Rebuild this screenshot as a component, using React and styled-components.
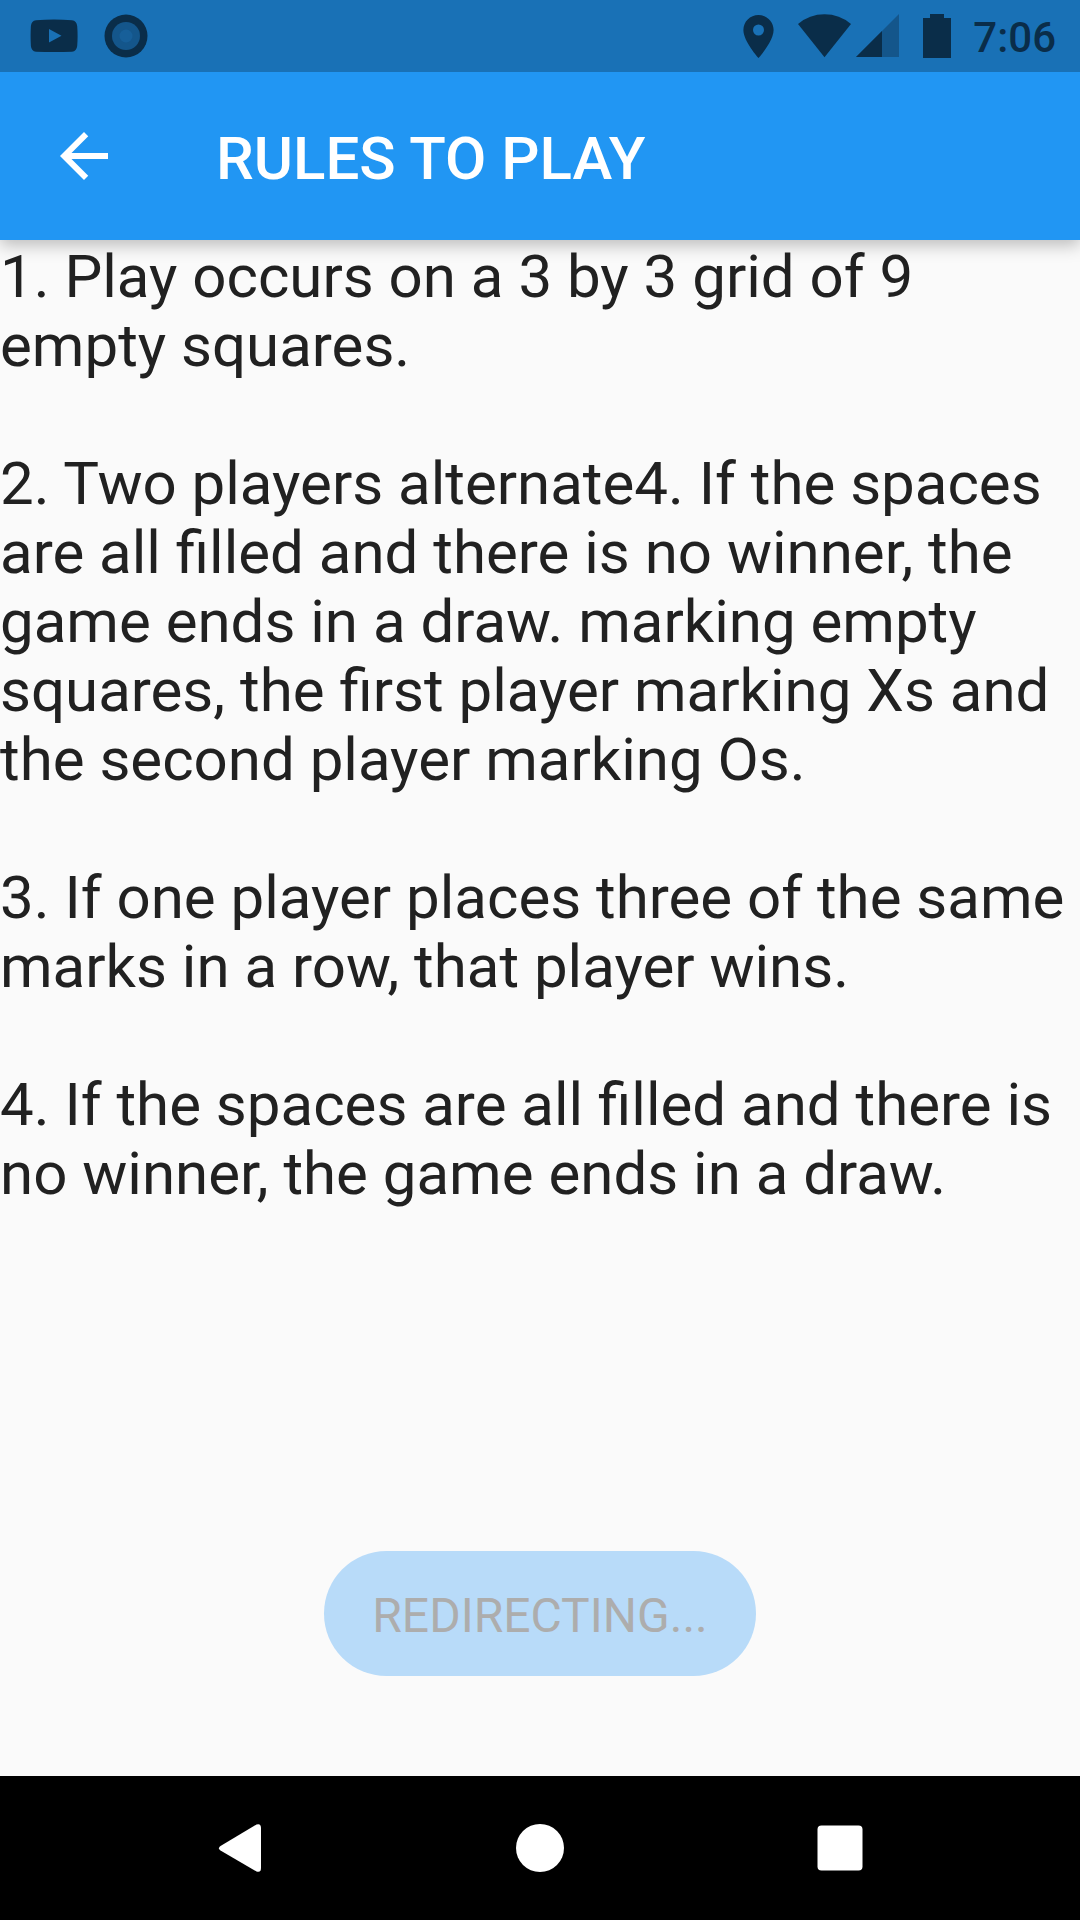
import React from "react";
import styled, { createGlobalStyle } from "styled-components";

const GlobalStyle = createGlobalStyle`
  *, *::before, *::after { box-sizing: border-box; }
  body {
    margin: 0;
    background: #fafafa;
    font-family: Roboto, "Noto Sans", sans-serif;
  }
`;

const Screen = styled.div`
  display: flex;
  flex-direction: column;
  min-height: 100vh;
`;

const StatusBar = styled.div`
  position: relative;
  z-index: 1;
  display: flex;
  align-items: center;
  justify-content: space-between;
  height: 72px;
  padding: 0 24px 0 30px;
  background: #1971b6;
  color: #0a2d49;
`;

const StatusGroup = styled.div`
  display: flex;
  align-items: center;
  gap: ${({ $gap }) => $gap}px;
`;

const Glyph = styled.svg`
  display: block;
  flex: none;
  fill: currentColor;
`;

const Clock = styled.time`
  padding-top: 4px;
  font-size: 42px;
  font-weight: 500;
  line-height: 50px;
`;

const AppBar = styled.header`
  position: relative;
  display: flex;
  align-items: center;
  gap: 72px;
  height: 168px;
  padding: 0 24px;
  background: #2196f3;
  color: #fff;
  box-shadow: 0 5px 16px rgba(0, 0, 0, 0.26);
`;

const IconButton = styled.button`
  display: grid;
  place-items: center;
  width: 120px;
  height: 120px;
  padding: 0;
  border: 0;
  background: none;
  color: inherit;
`;

const Title = styled.h1`
  margin: 0;
  padding-top: 6px;
  font-size: 60px;
  font-weight: 500;
  line-height: 70px;
`;

const Content = styled.main`
  display: flex;
  flex: 1;
  flex-direction: column;
  align-items: center;
  justify-content: space-between;
  gap: 69px;
  padding: 2px 0 100px;
`;

const Rules = styled.div`
  display: flex;
  flex-direction: column;
  gap: 69px;
  width: 100%;
`;

const Rule = styled.p`
  margin: 0;
  color: #212121;
  font-size: 60px;
  line-height: 69px;
`;

const PillButton = styled.button`
  height: 125px;
  padding: 4px 48px 0;
  border: 0;
  border-radius: 63px;
  background: #b8dbf9;
  color: #adadad;
  font-family: inherit;
  font-size: 48px;
  line-height: 56px;
`;

const NavBar = styled.nav`
  display: grid;
  grid-template-columns: repeat(3, 1fr);
  justify-items: center;
  align-items: center;
  height: 144px;
  padding: 0 90px;
  background: #000;
  color: #fff;
`;

const rules = [
  "1. Play occurs on a 3 by 3 grid of 9 empty squares.",
  "2. Two players alternate4. If the spaces are all filled and there is no winner, the game ends in a draw. marking empty squares, the first player marking Xs and the second player marking Os.",
  "3. If one player places three of the same marks in a row, that player wins.",
  "4. If the spaces are all filled and there is no winner, the game ends in a draw.",
];

export default function App() {
  return (
    <>
      <GlobalStyle />
      <Screen>
        <StatusBar>
          <StatusGroup $gap={26}>
            <Glyph width="48" height="34" viewBox="0 0 48 34" aria-hidden="true">
              <path
                fillRule="evenodd"
                d="M6 1.3Q24-.3 42 1.3Q46.6 2 47.2 7Q48 17 47.2 27Q46.6 32.2 42 32.7Q24 33.5 6 32.7Q1.4 32.2.9 27Q.3 17 .9 7Q1.4 2 6 1.3ZM19 10V23.5L31.5 16.8Z"
              />
            </Glyph>
            <Glyph width="44" height="44" viewBox="0 0 44 44" aria-hidden="true">
              <circle cx="22" cy="22" r="21.5" />
              <circle cx="22" cy="22" r="14" fill="#14568b" />
              <circle cx="22" cy="22" r="6.5" fill="#175f99" />
            </Glyph>
          </StatusGroup>
          <StatusGroup $gap={24}>
            <Glyph width="31" height="44" viewBox="0 0 31 44" aria-hidden="true">
              <path
                fillRule="evenodd"
                d="M15.5 1C7 1 .4 7.7.4 16C.4 27.4 15.5 44 15.5 44S30.6 27.4 30.6 16C30.6 7.7 24 1 15.5 1ZM15.5 10.5A5.5 5.5 0 1 1 15.5 21.5A5.5 5.5 0 0 1 15.5 10.5Z"
              />
            </Glyph>
            <StatusGroup $gap={5}>
              <Glyph width="53" height="44" viewBox="0 0 53 44" aria-hidden="true">
                <path d="M0 10Q11.500 .3 26.500 .3T53 10L26.500 43.300Z" />
              </Glyph>
              <Glyph width="43" height="44" viewBox="0 0 43 44" aria-hidden="true">
                <path d="M43 0V43H0Z" fill="#14568b" />
                <path d="M26 17V43H0Z" />
              </Glyph>
            </StatusGroup>
            <StatusGroup $gap={22}>
              <Glyph width="28" height="44" viewBox="0 0 28 44" aria-hidden="true">
                <path d="M7 0H21V4H28V44H0V4H7Z" />
              </Glyph>
              <Clock>7:06</Clock>
            </StatusGroup>
          </StatusGroup>
        </StatusBar>
        <AppBar>
          <IconButton type="button" aria-label="Back">
            <Glyph width="72" height="72" viewBox="0 0 24 24" aria-hidden="true">
              <path d="M20 11H7.830L13.420 5.410L12 4L4 12L12 20L13.410 18.590L7.830 13H20Z" />
            </Glyph>
          </IconButton>
          <Title>RULES TO PLAY</Title>
        </AppBar>
        <Content>
          <Rules>
            {rules.map((rule) => (
              <Rule key={rule}>{rule}</Rule>
            ))}
          </Rules>
          <PillButton type="button" disabled>
            REDIRECTING...
          </PillButton>
        </Content>
        <NavBar>
          <IconButton type="button" aria-label="System back">
            <Glyph width="48" height="48" viewBox="0 0 48 48" aria-hidden="true">
              <path d="M4.500 22L40.500 .5Q45 -1 45 4V44Q45 49 40.500 47.500L4.500 26.500Q1.500 24.200 4.500 22Z" />
            </Glyph>
          </IconButton>
          <IconButton type="button" aria-label="Home">
            <Glyph width="48" height="48" viewBox="0 0 48 48" aria-hidden="true">
              <circle cx="24" cy="24" r="24" />
            </Glyph>
          </IconButton>
          <IconButton type="button" aria-label="Recent apps">
            <Glyph width="48" height="48" viewBox="0 0 48 48" aria-hidden="true">
              <rect x="1.500" y="1.500" width="45" height="45" rx="4" />
            </Glyph>
          </IconButton>
        </NavBar>
      </Screen>
    </>
  );
}
